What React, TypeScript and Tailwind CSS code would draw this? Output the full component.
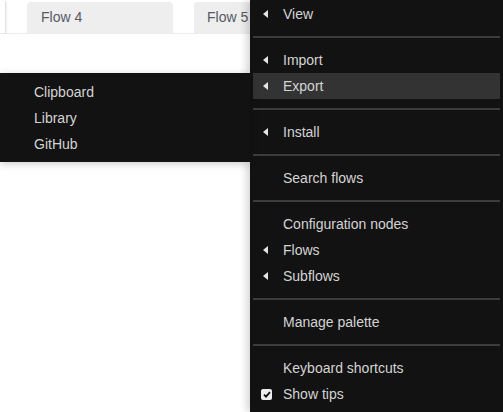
import React from 'react';

type MenuItem =
  | { kind: 'sep' }
  | { kind: 'item'; label: string; sub?: boolean; active?: boolean; checked?: boolean };

const mainMenu: MenuItem[] = [
  { kind: 'item', label: 'View', sub: true },
  { kind: 'sep' },
  { kind: 'item', label: 'Import', sub: true },
  { kind: 'item', label: 'Export', sub: true, active: true },
  { kind: 'sep' },
  { kind: 'item', label: 'Install', sub: true },
  { kind: 'sep' },
  { kind: 'item', label: 'Search flows' },
  { kind: 'sep' },
  { kind: 'item', label: 'Configuration nodes' },
  { kind: 'item', label: 'Flows', sub: true },
  { kind: 'item', label: 'Subflows', sub: true },
  { kind: 'sep' },
  { kind: 'item', label: 'Manage palette' },
  { kind: 'sep' },
  { kind: 'item', label: 'Keyboard shortcuts' },
  { kind: 'item', label: 'Show tips', checked: true },
];

const exportMenu = ['Clipboard', 'Library', 'GitHub'];

const Arrow = () => (
  <svg width="5" height="8" viewBox="0 0 5 8" className="block">
    <path d="M5 0 L0 4 L5 8 Z" fill="#e6e6e6" />
  </svg>
);

const Check = () => (
  <span className="flex h-[11px] w-[11px] items-center justify-center rounded-[2px] bg-[#eeeeee]">
    <svg width="8" height="7" viewBox="0 0 8 7">
      <path d="M1 3.6 L3 5.6 L7 1.2" fill="none" stroke="#111" strokeWidth="1.8" />
    </svg>
  </span>
);

const App: React.FC = () => {
  return (
    <div
      className="relative h-[412px] w-[503px] overflow-hidden bg-white text-[14px]"
      style={{ fontFamily: '"Liberation Sans", Arial, sans-serif' }}
    >
      {/* tab bar */}
      <div className="flex h-[34px] items-end border-b border-[#ececec] bg-white">
        <div className="h-[32px] w-[6px] border-r border-[#e2e2e2] bg-white shadow-[1px_0_3px_rgba(0,0,0,0.06)]" />
        <div className="ml-[21px] flex h-[31px] w-[146px] items-center rounded-t-[4px] bg-[#eeeeee] pl-[14px] text-[#555a63]">
          Flow 4
        </div>
        <div className="ml-[21px] flex h-[31px] w-[146px] items-center rounded-t-[4px] bg-[#eeeeee] pl-[13px] text-[#555a63]">
          Flow 5
        </div>
      </div>

      {/* main menu */}
      <div className="absolute left-[250px] top-0 w-[260px] bg-[#121212] pt-px pb-[5px] pl-[3px] pr-[10px] shadow-[-3px_0_8px_rgba(0,0,0,0.18)]">
        {mainMenu.map((m, i) =>
          m.kind === 'sep' ? (
            <div key={i} className="my-[9px] h-[2px] bg-[#3c3c3c]" />
          ) : (
            <div
              key={i}
              className={`flex h-[26px] items-center text-[#d4d4d4] ${m.active ? 'bg-[#333333]' : ''}`}
            >
              <span className="flex w-[30px] items-center justify-start pl-[8px]">
                {m.sub && (
                  <span className="pl-[2px]">
                    <Arrow />
                  </span>
                )}
                {m.checked && <Check />}
              </span>
              <span>{m.label}</span>
            </div>
          )
        )}
      </div>

      {/* export submenu */}
      <div className="absolute left-0 top-[73px] w-[250px] bg-[#121212] pt-[6px] pb-[5px] shadow-[0_2px_8px_rgba(0,0,0,0.2)]">
        {exportMenu.map((label) => (
          <div key={label} className="flex h-[26px] items-center pl-[34px] text-[#d4d4d4]">
            {label}
          </div>
        ))}
      </div>
    </div>
  );
};

export default App;
